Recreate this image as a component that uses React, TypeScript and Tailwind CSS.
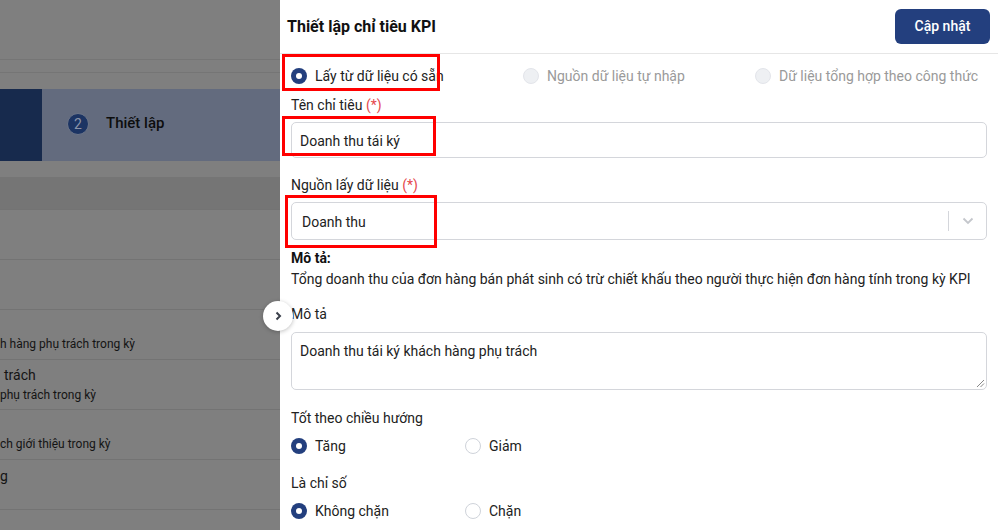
import React from "react";

function Radio({ state }: { state: "on" | "off" | "disabled" }) {
  if (state === "on")
    return (
      <span className="w-4 h-4 rounded-full bg-[#233f7e] flex items-center justify-center shrink-0">
        <span className="w-[6px] h-[6px] rounded-full bg-white" />
      </span>
    );
  if (state === "disabled")
    return <span className="w-4 h-4 rounded-full bg-[#eef0f3] border border-[#e3e5ea] shrink-0" />;
  return <span className="w-4 h-4 rounded-full bg-white border border-[#cfd3da] shrink-0" />;
}

function Opt({ state, label }: { state: "on" | "off" | "disabled"; label: string }) {
  return (
    <div className="flex items-center gap-[8px] h-5">
      <Radio state={state} />
      <span className={state === "disabled" ? "text-[#9a9a9a]" : "text-[#222]"}>{label}</span>
    </div>
  );
}

export default function App() {
  return (
    <div
      className="relative w-[998px] h-[530px] overflow-hidden flex text-[14px]"
      style={{ fontFamily: "Roboto, 'Noto Sans', sans-serif" }}
    >
      {/* Left dimmed page */}
      <div className="w-[280px] shrink-0 bg-[#7f7f7f] flex flex-col text-[#141414]">
        <div className="h-[59px] shrink-0" />
        <div className="h-px bg-[#757575] shrink-0" />
        <div className="h-[12px] shrink-0" />
        <div className="h-px bg-[#757575] shrink-0" />
        <div className="h-[16px] shrink-0" />
        <div className="h-[72px] flex shrink-0">
          <div className="w-[42px] bg-[#172a4d]" />
          <div className="flex-1 bg-[#636b7e] flex items-center">
            <span className="ml-[25px] mt-[-2px] w-[22px] h-[22px] rounded-full bg-[#1c3463] border border-[#6d7689] text-[#8a93a8] text-[14px] flex items-center justify-center">
              2
            </span>
            <span className="ml-[17px] mt-[-3px] text-[15px] font-medium text-[#0d0d0d]">Thiết lập</span>
          </div>
        </div>
        <div className="h-[16px] shrink-0" />
        <div className="h-[32px] bg-[#757575] shrink-0" />
        <div className="h-px bg-[#737373] shrink-0" />
        <div className="h-[49px] shrink-0" />
        <div className="h-px bg-[#737373] shrink-0" />
        <div className="h-[49px] shrink-0" />
        <div className="h-px bg-[#737373] shrink-0" />
        <div className="h-[49px] shrink-0 flex flex-col justify-end pb-[7px] text-[12px] leading-[16px]">
          <span>h hàng phụ trách trong kỳ</span>
        </div>
        <div className="h-px bg-[#737373] shrink-0" />
        <div className="h-[49px] shrink-0 flex flex-col pt-[6px]">
          <span className="pl-[4px] text-[14px] leading-[18px]">trách</span>
          <span className="text-[12px] leading-[16px] mt-[3px]">phụ trách trong kỳ</span>
        </div>
        <div className="h-px bg-[#737373] shrink-0" />
        <div className="h-[49px] shrink-0 flex flex-col justify-end pb-[7px] text-[12px] leading-[16px]">
          <span>ch giới thiệu trong kỳ</span>
        </div>
        <div className="h-px bg-[#737373] shrink-0" />
        <div className="h-[49px] shrink-0 flex flex-col pt-[7px]">
          <span className="text-[14px] leading-[18px]">g</span>
        </div>
        <div className="h-px bg-[#737373] shrink-0" />
      </div>

      {/* Right drawer */}
      <div className="flex-1 bg-white flex flex-col">
        <div className="h-[54px] border-b border-[#e6e6e6] flex items-center justify-between pl-[7px] pr-[8px]">
          <span className="text-[16px] font-bold text-[#111]">Thiết lập chỉ tiêu KPI</span>
          <button className="w-[95px] h-[35px] mt-[-1px] rounded-[6px] bg-[#233f7e] text-white text-[14px] font-medium">
            Cập nhật
          </button>
        </div>

        <div className="pl-[11px] pr-[11px] flex flex-col">
          <div className="grid grid-cols-3 mt-[12px]">
            <Opt state="on" label="Lấy từ dữ liệu có sẵn" />
            <Opt state="disabled" label="Nguồn dữ liệu tự nhập" />
            <Opt state="disabled" label="Dữ liệu tổng hợp theo công thức" />
          </div>

          <div className="mt-[9px] h-5 leading-5 text-[#222]">
            Tên chỉ tiêu <span className="text-[#e5484d]">(*)</span>
          </div>
          <div className="mt-[7px] h-[36px] border border-[#d4d6db] rounded-[5px] flex items-center pl-[8px] text-[#222]">
            <span className="mt-[3px]">Doanh thu tái ký</span>
          </div>

          <div className="mt-[17px] h-5 leading-5 text-[#222]">
            Nguồn lấy dữ liệu <span className="text-[#e5484d]">(*)</span>
          </div>
          <div className="mt-[7px] h-[38px] border border-[#d4d6db] rounded-[5px] flex items-center pl-[10px] text-[#222]">
            <span className="flex-1 mt-[3px]">Doanh thu</span>
            <span className="w-px h-[20px] bg-[#d4d6db]" />
            <span className="w-[37px] flex items-center justify-center">
              <svg width="12" height="8" viewBox="0 0 12 8" fill="none">
                <path d="M1.5 1.5 L6 6 L10.5 1.5" stroke="#c4c7cc" strokeWidth="1.8" />
              </svg>
            </span>
          </div>

          <div className="mt-[8px] h-5 leading-5 font-bold text-[#111]">Mô tả:</div>
          <div className="mt-[1px] h-5 leading-5 text-[#222]">
            Tổng doanh thu của đơn hàng bán phát sinh có trừ chiết khấu theo người thực hiện đơn hàng tính trong kỳ KPI
          </div>

          <div className="mt-[15px] h-5 leading-5 text-[#222]">Mô tả</div>
          <div className="relative mt-[8px] h-[58px] border border-[#d4d6db] rounded-[5px] pl-[8px] pt-[8px] text-[#222] leading-5">
            Doanh thu tái ký khách hàng phụ trách
            <svg className="absolute right-[1px] bottom-[1px]" width="9" height="9" viewBox="0 0 9 9">
              <path d="M8 1 L1 8 M8 4.5 L4.5 8" stroke="#888" strokeWidth="1" />
            </svg>
          </div>

          <div className="mt-[18px] h-5 leading-5 text-[#222]">Tốt theo chiều hướng</div>
          <div className="grid grid-cols-4 mt-[8px]">
            <Opt state="on" label="Tăng" />
            <Opt state="off" label="Giảm" />
          </div>

          <div className="mt-[17px] h-5 leading-5 text-[#222]">Là chỉ số</div>
          <div className="grid grid-cols-4 mt-[8px]">
            <Opt state="on" label="Không chặn" />
            <Opt state="off" label="Chặn" />
          </div>
        </div>
      </div>

      {/* Red annotation boxes */}
      <div className="absolute left-[282px] top-[54px] w-[158px] h-[37px] border-[3px] border-[#ff0000]" />
      <div className="absolute left-[282px] top-[116px] w-[154px] h-[40px] border-[3px] border-[#ff0000]" />
      <div className="absolute left-[285px] top-[195px] w-[152px] h-[53px] border-[3px] border-[#ff0000]" />

      {/* Collapse button */}
      <div className="absolute left-[263px] top-[301px] w-[30px] h-[30px] rounded-full bg-white shadow-[0_1px_4px_rgba(0,0,0,0.25)] flex items-center justify-center">
        <svg width="10" height="10" viewBox="0 0 10 10" fill="none">
          <path d="M3.5 1.5 L7 5 L3.5 8.5" stroke="#3a3f4a" strokeWidth="2" />
        </svg>
      </div>
    </div>
  );
}
